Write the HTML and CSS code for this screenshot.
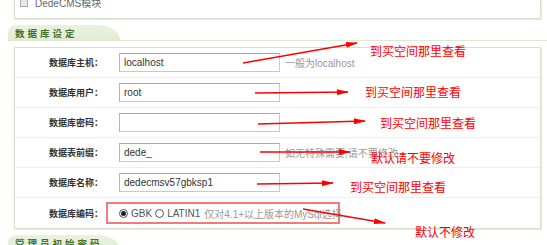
FILE: index.html
```html
<!DOCTYPE html>
<html lang="zh-CN">
  <head>
    <meta charset="UTF-8" />
    <title>数据库设定</title>
    <link rel="stylesheet" href="styles.css">
  </head>
  <body>
    <div class="page">
      <div class="box box-top">
        <label class="opt"><span class="check"></span>DedeCMS模块</label>
      </div>

      <div class="sect"><div class="tab">数据库设定</div></div>
      <div class="box">
        <div class="row">
          <span class="lbl">数据库主机：</span>
          <input class="txt" type="text" value="localhost" />
          <span class="hint">一般为localhost</span>
        </div>
        <div class="row">
          <span class="lbl">数据库用户：</span>
          <input class="txt" type="text" value="root" />
        </div>
        <div class="row">
          <span class="lbl">数据库密码：</span>
          <input class="txt" type="text" value="" />
        </div>
        <div class="row">
          <span class="lbl">数据表前缀：</span>
          <input class="txt" type="text" value="dede_" />
          <span class="hint">如无特殊需要,请不要修改</span>
        </div>
        <div class="row">
          <span class="lbl">数据库名称：</span>
          <input class="txt" type="text" value="dedecmsv57gbksp1" />
        </div>
        <div class="row">
          <span class="lbl">数据库编码：</span>
          <div class="charset">
            <span class="radio on"></span><span class="opt-name">GBK</span>
            <span class="radio"></span><span class="opt-name">LATIN1</span>
            <span class="note">仅对4.1+以上版本的MySql选择</span>
          </div>
        </div>
      </div>

      <div class="sect"><div class="tab">管理员初始密码</div></div>

      <svg class="marks" width="547" height="245" viewBox="0 0 547 245">
        <defs>
          <marker id="head" markerUnits="userSpaceOnUse" markerWidth="12" markerHeight="6" refX="11" refY="3" orient="auto">
            <path d="M0,0 L12,3 L0,6 Z" fill="#f00" />
          </marker>
        </defs>
        <g stroke="#f00" stroke-width="1.5" marker-end="url(#head)">
          <line x1="243" y1="63" x2="357" y2="43" />
          <line x1="255" y1="93" x2="348" y2="92" />
          <line x1="258" y1="124" x2="365" y2="121" />
          <line x1="260" y1="152" x2="350" y2="152" />
          <line x1="257" y1="184" x2="333" y2="183" />
          <line x1="303" y1="209" x2="385" y2="223" />
        </g>
        <g class="mark-text">
          <text x="370" y="56">到买空间那里查看</text>
          <text x="365" y="97">到买空间那里查看</text>
          <text x="380" y="128">到买空间那里查看</text>
          <text x="371" y="163">默认请不要修改</text>
          <text x="350" y="192">到买空间那里查看</text>
          <text x="415" y="237">默认不修改</text>
        </g>
      </svg>
    </div>
  </body>
</html>
```

FILE: styles.css
```css
* {
  box-sizing: border-box;
}
body {
  margin: 0;
  background: #fff;
  overflow: hidden;
  font-family: "Liberation Sans", "Noto Sans CJK SC", sans-serif;
}
.page {
  position: relative;
  width: 547px;
  height: 245px;
}
.box {
  margin-left: 14px;
  width: 527px;
  border: 1px solid #d6dfcb;
  box-shadow: 1px 1px 0 #e5eade;
  background: #fff;
}
.box-top {
  height: 19px;
  border-top: none;
  padding-left: 5px;
  overflow: hidden;
}
.opt {
  display: flex;
  align-items: center;
  gap: 7px;
  margin-top: -5px;
  font-size: 10px;
  color: #666;
}
.check {
  width: 8px;
  height: 8px;
  border: 1px solid #aaa;
  background: #e8e8e8;
}
.sect {
  display: flex;
  margin: 6px 0 0 8px;
  border-bottom: 1px solid #dfe9d1;
}
.tab {
  width: 112px;
  height: 15px;
  padding-left: 7px;
  background: linear-gradient(#eaf2df, #e1ecd4);
  border-radius: 8px 22px 0 0 / 8px 15px 0 0;
  font-family: "Noto Sans CJK SC", sans-serif;
  font-size: 9.5px;
  font-weight: bold;
  line-height: 16px;
  letter-spacing: 3px;
  white-space: nowrap;
  color: #44702c;
}
.sect + .box {
  margin-top: 6px;
}
.row {
  display: grid;
  grid-template-columns: 88px auto auto 1fr;
  column-gap: 16px;
  align-items: center;
  height: 30px;
  border-bottom: 1px solid #efefef;
}
.row:last-child {
  border-bottom: none;
}
.lbl {
  text-align: right;
  font-family: "Noto Sans CJK SC", sans-serif;
  font-size: 9px;
  font-weight: bold;
  color: #333;
}
.txt {
  width: 161px;
  height: 19px;
  margin: 0;
  padding: 0 4px;
  border: 1px solid #c9c9c9;
  border-top-color: #a9a9a9;
  border-left-color: #b5b5b5;
  font-family: "Liberation Sans", sans-serif;
  font-size: 10px;
  color: #333;
  outline: none;
}
.hint {
  margin-left: -11px;
  font-size: 10px;
  color: #999;
  white-space: nowrap;
}
.charset {
  grid-column: 2 / 5;
  display: flex;
  align-items: center;
  width: 234px;
  height: 22px;
  margin-left: -13px;
  padding-left: 11px;
  border: 2px solid #f27a7a;
  font-size: 10px;
  white-space: nowrap;
}
.radio {
  flex: none;
  width: 9px;
  height: 9px;
  margin-right: 3px;
  border: 1px solid #555;
  border-radius: 50%;
  background: #fff;
  display: flex;
  align-items: center;
  justify-content: center;
}
.radio.on::after {
  content: "";
  width: 5px;
  height: 5px;
  border-radius: 50%;
  background: #222;
}
.opt-name {
  margin-right: 3px;
  color: #555;
}
.note {
  margin-left: 1px;
  color: #999;
}
.marks {
  position: absolute;
  left: 0;
  top: 0;
  pointer-events: none;
}
.mark-text {
  font-family: "Noto Sans CJK SC", sans-serif;
  font-size: 12px;
  fill: #f00;
}
```
